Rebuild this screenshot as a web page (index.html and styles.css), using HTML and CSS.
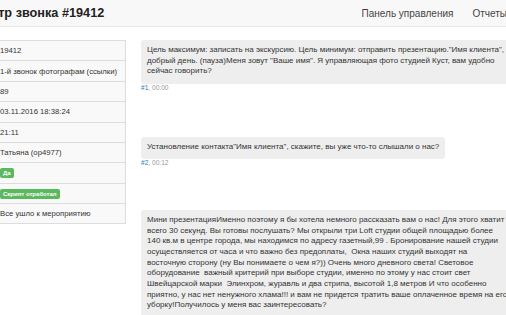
FILE: index.html
```html
<!DOCTYPE html>
<html lang="ru">
<head>
    <meta charset="UTF-8">
    <meta name="viewport" content="width=device-width, initial-scale=1.0">
    <title>Просмотр звонка #19412</title>
    <link rel="stylesheet" href="styles.css">
</head>
<body>
    <div class="page">
        <header class="navbar">
            <span class="brand">Просмотр звонка #19412</span>
            <nav class="nav">
                <a href="#">Панель управления</a>
                <a href="#">Отчеты</a>
            </nav>
        </header>

        <div class="call-view">
            <aside class="call-info">
                <table class="info-table">
                    <tr><td>19412</td></tr>
                    <tr><td>1-й звонок фотографам (ссылки)</td></tr>
                    <tr><td>89</td></tr>
                    <tr><td>03.11.2016 18:38:24</td></tr>
                    <tr><td>21:11</td></tr>
                    <tr><td>Татьяна (op4977)</td></tr>
                    <tr><td><span class="label">Да</span></td></tr>
                    <tr><td><span class="label">Скрипт отработал</span></td></tr>
                    <tr><td>Все ушло к мероприятию</td></tr>
                </table>
            </aside>

            <section class="messages">
                <div class="message">
                    <div class="bubble">Цель максимум: записать на экскурсию. Цель минимум: отправить презентацию."Имя клиента",<br>добрый день. (пауза)Меня зовут "Ваше имя". Я управляющая фото студией Куст, вам удобно<br>сейчас говорить?</div>
                    <div class="meta"><a href="#">#1</a>, 00:00</div>
                </div>
                <div class="message">
                    <div class="bubble">Установление контакта"Имя клиента", скажите, вы уже что-то слышали о нас?</div>
                    <div class="meta"><a href="#">#2</a>, 00:12</div>
                </div>
                <div class="message">
                    <div class="bubble">Мини презентацияИменно поэтому я бы хотела немного рассказать вам о нас! Для этого хватит<br>всего 30 секунд. Вы готовы послушать? Мы открыли три Loft студии общей площадью более<br>140 кв.м в центре города, мы находимся по адресу газетный,99 . Бронирование нашей студии<br>осуществляется от часа и что важно без предоплаты,&nbsp; Окна наших студий выходят на<br>восточную сторону (ну Вы понимаете о чем я?)) Очень много дневного света! Световое<br>оборудование&nbsp; важный критерий при выборе студии, именно по этому у нас стоит свет<br>Швейцарской марки&nbsp; Элинхром, журавль и два стрипа, высотой 1,8 метров И что особенно<br>приятно, у нас нет ненужного хлама!!! и вам не придется тратить ваше оплаченное время на его<br>уборку!Получилось у меня вас заинтересовать?</div>
                    <div class="meta"><a href="#">#3</a>, 00:31</div>
                </div>
            </section>
        </div>
    </div>
</body>
</html>
```

FILE: styles.css
```css
:root {
    --navbar-bg: #f8f8f8;
    --navbar-border: #e7e7e7;
    --table-bg: #f9f9f9;
    --table-border: #dddddd;
    --bubble-bg: #eeeeee;
    --text: #333333;
    --muted: #999999;
    --link: #337ab7;
    --success: #5cb85c;
}

body {
    margin: 0;
    font-family: 'Liberation Sans', Arial, sans-serif;
    color: var(--text);
    background: white;
    overflow: hidden;
}

.page {
    width: 575px;
    margin-left: -52px;
}

.navbar {
    display: flex;
    align-items: center;
    justify-content: space-between;
    height: 26px;
    padding: 0 16px 0 2px;
    background: var(--navbar-bg);
    border-bottom: 1px solid var(--navbar-border);
}

.brand {
    font-size: 12.7px;
    font-weight: bold;
    color: #222;
}

.nav {
    display: flex;
    gap: 19px;
}

.nav a {
    font-size: 10px;
    color: #444;
    text-decoration: none;
}

.call-view {
    display: grid;
    grid-template-columns: 131px 1fr;
    gap: 15px;
    margin: 13px 0 0 47px;
}

.info-table {
    width: 100%;
    border-collapse: collapse;
    background: var(--table-bg);
    border: 1px solid var(--table-border);
}

.info-table td {
    padding: 4.2px 4px;
    font-size: 7.7px;
    line-height: 11px;
    border-top: 1px solid var(--table-border);
}

.label {
    display: inline-block;
    padding: 1px 3px;
    font-size: 6px;
    line-height: 8px;
    font-weight: bold;
    color: white;
    background: var(--success);
    border-radius: 2px;
}

.message {
    margin-bottom: 43.5px;
}

.bubble {
    display: inline-block;
    max-width: 400px;
    padding: 5px 6px 7px;
    font-size: 8px;
    line-height: 10.7px;
    background: var(--bubble-bg);
    border-radius: 3px;
}

.meta {
    margin-top: 0;
    font-size: 6.6px;
    color: var(--muted);
}

.meta a {
    color: var(--link);
    text-decoration: none;
}
```
